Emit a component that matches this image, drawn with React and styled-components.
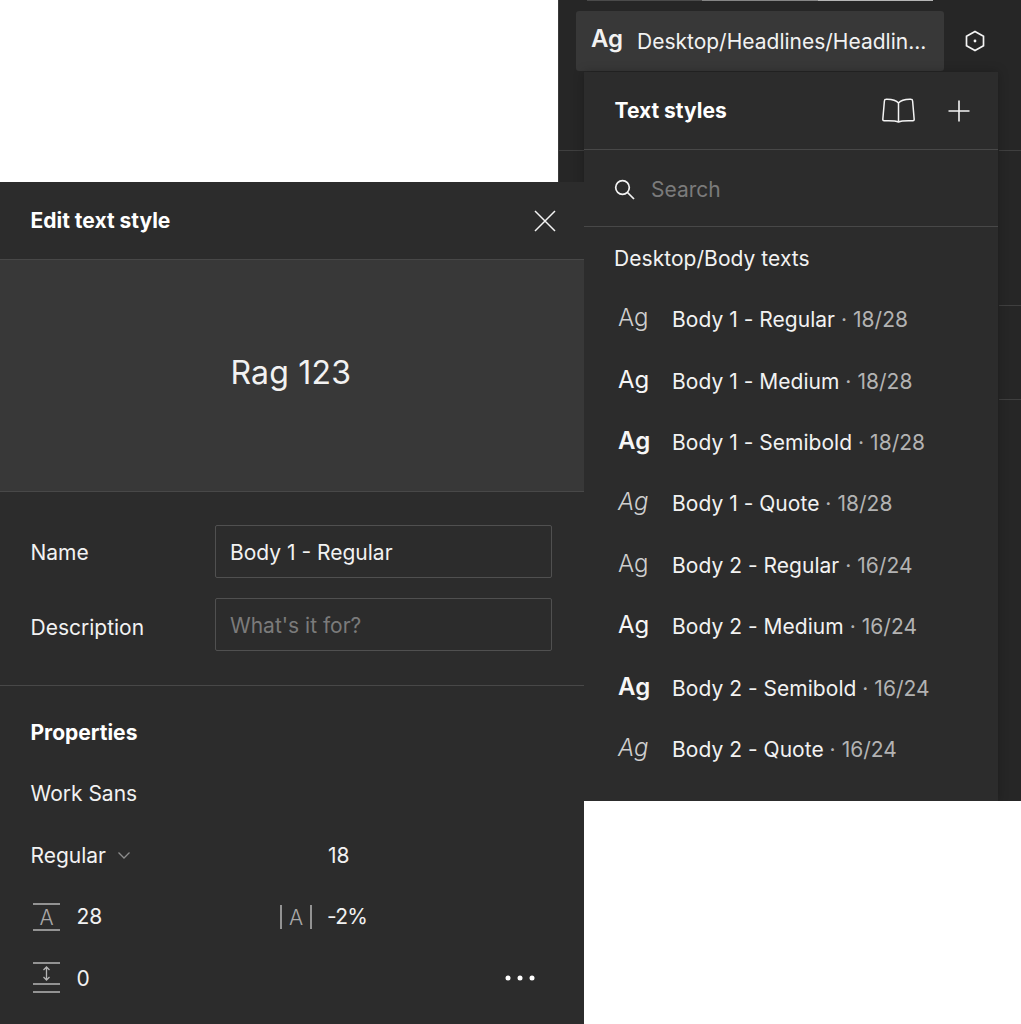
import React from "react";
import styled, { createGlobalStyle } from "styled-components";

const GlobalStyle = createGlobalStyle`
  html, body {
    margin: 0;
    padding: 0;
    background: #fff;
  }
  * {
    box-sizing: border-box;
  }
`;

const Canvas = styled.div`
  position: relative;
  width: 1021px;
  height: 1024px;
  overflow: hidden;
  background: #fff;
  font-family: Inter, "Liberation Sans", sans-serif;
  color: #f2f2f2;
`;

const BackWindow = styled.div`
  position: absolute;
  left: 558px;
  top: 0;
  width: 463px;
  height: 801px;
  overflow: hidden;
  padding: 11px 0 0 17px;
  background: #262626;
  border-left: 1px solid #3a3a3a;
`;

const TopStrip = styled.div`
  position: absolute;
  left: 28px;
  top: 0;
  width: 346px;
  height: 1px;
  background: linear-gradient(
    to right,
    #4a4a4a 0 115px,
    #858585 115px 231px,
    #b5b5b5 231px 346px
  );
`;

const SideLine = styled.div`
  position: absolute;
  height: 1px;
  left: ${(p) => (p.$side === "left" ? "0" : "440px")};
  width: ${(p) => (p.$side === "left" ? "26px" : "23px")};
  top: ${(p) => p.$top}px;
  background: #3f3f3f;
`;

const Toolbar = styled.div`
  display: flex;
  align-items: center;
`;

const StyleField = styled.div`
  display: flex;
  align-items: center;
  width: 368px;
  height: 60px;
  padding-left: 15px;
  background: #383838;
  border-radius: 3px;
`;

const FieldAg = styled.span`
  width: 46px;
  margin-top: -6px;
  font-size: 24px;
  font-weight: 600;
`;

const FieldName = styled.span`
  font-size: 21px;
  white-space: nowrap;
`;

const ToolbarIcon = styled.div`
  display: flex;
  margin-left: 20px;
`;

const Popover = styled.div`
  position: relative;
  width: 414px;
  height: 729px;
  margin: 1px 0 0 8px;
  background: #2c2c2c;
  overflow: hidden;
  box-shadow: 0 0 10px rgba(0, 0, 0, 0.25);
`;

const PopoverHeader = styled.div`
  display: flex;
  align-items: center;
  height: 78px;
  padding: 0 27px 0 30.5px;
  border-bottom: 1px solid #484848;
`;

const Title = styled.h2`
  flex: 1;
  margin: 0;
  font-size: 21px;
  font-weight: 700;
  color: #fff;
`;

const HeaderIcons = styled.div`
  display: flex;
  align-items: center;
  gap: 31px;
`;

const SearchRow = styled.div`
  display: flex;
  align-items: center;
  gap: 16px;
  height: 77px;
  padding: 2px 0 0 30px;
  border-bottom: 1px solid #484848;
  font-size: 21px;
  color: #7b7b7b;
`;

const GroupLabel = styled.div`
  padding: 17px 0 0 30px;
  height: 62px;
  font-size: 21px;
  line-height: 29px;
  letter-spacing: 0.05px;
`;

const StyleRow = styled.div`
  display: flex;
  align-items: center;
  height: 61.43px;
  padding-left: 34px;
  white-space: nowrap;
  letter-spacing: 0.03px;
`;

const RowAg = styled.span`
  width: 54px;
  margin-top: -4px;
  font-size: 24px;
  font-weight: ${(p) => p.$weight};
  font-style: ${(p) => (p.$italic ? "italic" : "normal")};
  color: ${(p) => (p.$weight === 300 ? "#cfcfcf" : "#f6f6f6")};
`;

const RowName = styled.span`
  font-size: 21px;
`;

const RowSize = styled.span`
  font-size: 21px;
  color: #b3b3b3;
`;

const EditPanel = styled.div`
  position: absolute;
  left: 0;
  top: 182px;
  width: 583.5px;
  height: 842px;
  background: #2c2c2c;
`;

const PanelHeader = styled.div`
  display: flex;
  align-items: center;
  justify-content: space-between;
  height: 78px;
  padding: 0 27px 0 30.5px;
  border-bottom: 1px solid #484848;
`;

const Preview = styled.div`
  display: flex;
  align-items: center;
  justify-content: center;
  height: 232px;
  padding: 0 2px 6px 0;
  background: #383838;
  border-bottom: 1px solid #484848;
  font-size: 32px;
  letter-spacing: 0.2px;
`;

const FormSection = styled.div`
  display: grid;
  grid-template-columns: 184.5px 337px;
  row-gap: 20px;
  align-items: center;
  height: 194px;
  padding: 33px 0 0 30.5px;
  align-content: start;
  border-bottom: 1px solid #484848;
`;

const FieldLabel = styled.label`
  padding-top: ${(p) => p.$nudge}px;
  font-size: 21px;
`;

const Field = styled.div`
  display: flex;
  align-items: center;
  height: 53px;
  padding: 2px 0 0 14px;
  border: 1px solid #505050;
  border-radius: 2px;
  font-size: 21px;
  color: ${(p) => (p.$placeholder ? "#7b7b7b" : "#f2f2f2")};
`;

const Properties = styled.div`
  padding: 32px 48.5px 0 30.5px;
`;

const PropertiesTitle = styled.div`
  font-size: 21px;
  font-weight: 700;
  line-height: 30px;
  color: #fff;
`;

const PropRow = styled.div`
  display: grid;
  grid-template-columns: 248.5px 1fr auto;
  align-items: center;
  height: 61.5px;
  font-size: 21px;
`;

const FontRow = styled(PropRow)`
  height: 62px;
  margin-top: 14.5px;
`;

const PropCell = styled.div`
  display: flex;
  align-items: center;
  gap: ${(p) => p.$gap || 0}px;
  padding-left: ${(p) => p.$inset || 0}px;
`;

const TightValue = styled.span`
  letter-spacing: -0.8px;
`;

const Icon = styled.svg`
  display: block;
  flex: none;
  fill: none;
  stroke: ${(p) => p.$color || "#f4f4f4"};
  stroke-width: ${(p) => p.$stroke || 1.5};
`;

const HexIcon = () => (
  <Icon width="22" height="24" viewBox="0 0 22 24">
    <path d="M11 2.5 19.5 7.2v9.6L11 21.5 2.5 16.8V7.2z" strokeWidth="1.7" />
    <circle cx="11" cy="12" r="1.4" fill="#f4f4f4" stroke="none" />
  </Icon>
);

const BookIcon = () => (
  <Icon width="35" height="25" viewBox="0 0 35 25">
    <path d="M17.5 5C15 2 11 1 5 1.2 4 1.2 3.5 1.8 3.400 3L1.800 21.500c0 .8.5 1.200 1.200 1.200 6 0 11-.5 14.500 1.300 3.500-1.800 8.500-1.300 14.500-1.300.7 0 1.200-.4 1.200-1.200L31.600 3C31.500 1.800 31 1.200 30 1.200 24 1 20 2 17.500 5ZM17.500 5V24" />
  </Icon>
);

const PlusIcon = () => (
  <Icon width="24" height="24" viewBox="0 0 24 24" $stroke={1.6}>
    <path d="M12 1.500v21M1.500 12h21" />
  </Icon>
);

const SearchIcon = () => (
  <Icon width="21" height="21" viewBox="0 0 21 21" $stroke={1.7}>
    <circle cx="8.500" cy="8.500" r="6.800" />
    <path d="M13.500 13.500 20 20" />
  </Icon>
);

const CloseIcon = () => (
  <Icon width="24" height="24" viewBox="0 0 24 24" $stroke={1.5}>
    <path d="M2 2l20 20M22 2 2 22" />
  </Icon>
);

const ChevronIcon = () => (
  <Icon width="14" height="9" viewBox="0 0 14 9" $color="#8c8c8c" $stroke={1.3}>
    <path d="M1.500 1.500 7 7l5.500-5.500" />
  </Icon>
);

const LineHeightIcon = () => (
  <Icon width="30" height="30" viewBox="0 0 30 30" $color="#b5b5b5">
    <path d="M2 2h27M2 28h27" />
    <text x="15.500" y="23" textAnchor="middle" fontSize="21" fontWeight="300" fontFamily="Inter, sans-serif" fill="#a8a8a8" stroke="none">A</text>
  </Icon>
);

const LetterSpacingIcon = () => (
  <Icon width="34" height="26" viewBox="0 0 34 26" $color="#b5b5b5">
    <path d="M2 1v24M32 1v24" />
    <text x="17" y="21" textAnchor="middle" fontSize="21" fontWeight="300" fontFamily="Inter, sans-serif" fill="#a8a8a8" stroke="none">A</text>
  </Icon>
);

const ParagraphIcon = () => (
  <Icon width="30" height="34" viewBox="0 0 30 34" $color="#b5b5b5">
    <path d="M2 2h27M2 23h27M2 31h27" />
    <path d="M15.500 6v13M12.500 9l3-3 3 3M12.500 16l3 3 3-3" strokeWidth="1.300" />
  </Icon>
);

const DotsIcon = () => (
  <Icon width="30" height="6" viewBox="0 0 30 6">
    <circle cx="3" cy="3" r="2.500" fill="#fff" stroke="none" />
    <circle cx="15" cy="3" r="2.500" fill="#fff" stroke="none" />
    <circle cx="27" cy="3" r="2.500" fill="#fff" stroke="none" />
  </Icon>
);

const styles = [
  { name: "Body 1 - Regular", size: "18/28", weight: 300 },
  { name: "Body 1 - Medium", size: "18/28", weight: 400 },
  { name: "Body 1 - Semibold", size: "18/28", weight: 600 },
  { name: "Body 1 - Quote", size: "18/28", weight: 300, italic: true },
  { name: "Body 2 - Regular", size: "16/24", weight: 300 },
  { name: "Body 2 - Medium", size: "16/24", weight: 400 },
  { name: "Body 2 - Semibold", size: "16/24", weight: 600 },
  { name: "Body 2 - Quote", size: "16/24", weight: 300, italic: true },
];

const sideLines = [
  { side: "left", top: 150 },
  { side: "right", top: 150 },
  { side: "right", top: 305 },
  { side: "right", top: 399 },
];

export default function App() {
  return (
    <Canvas>
      <GlobalStyle />
      <BackWindow>
        <TopStrip />
        {sideLines.map((l) => (
          <SideLine key={l.side + l.top} $side={l.side} $top={l.top} />
        ))}
        <Toolbar>
          <StyleField>
            <FieldAg>Ag</FieldAg>
            <FieldName>Desktop/Headlines/Headlin...</FieldName>
          </StyleField>
          <ToolbarIcon>
            <HexIcon />
          </ToolbarIcon>
        </Toolbar>
        <Popover>
          <PopoverHeader>
            <Title>Text styles</Title>
            <HeaderIcons>
              <BookIcon />
              <PlusIcon />
            </HeaderIcons>
          </PopoverHeader>
          <SearchRow>
            <SearchIcon />
            <span>Search</span>
          </SearchRow>
          <GroupLabel>Desktop/Body texts</GroupLabel>
          {styles.map((s) => (
            <StyleRow key={s.name}>
              <RowAg $weight={s.weight} $italic={s.italic}>Ag</RowAg>
              <RowName>{s.name}</RowName>
              <RowSize>&nbsp;· {s.size}</RowSize>
            </StyleRow>
          ))}
        </Popover>
      </BackWindow>

      <EditPanel>
        <PanelHeader>
          <Title>Edit text style</Title>
          <CloseIcon />
        </PanelHeader>
        <Preview>Rag 123</Preview>
        <FormSection>
          <FieldLabel $nudge={2}>Name</FieldLabel>
          <Field>Body 1 - Regular</Field>
          <FieldLabel $nudge={6}>Description</FieldLabel>
          <Field $placeholder>What's it for?</Field>
        </FormSection>
        <Properties>
          <PropertiesTitle>Properties</PropertiesTitle>
          <FontRow>
            <span>Work Sans</span>
          </FontRow>
          <PropRow>
            <PropCell $gap={11}>
              Regular <ChevronIcon />
            </PropCell>
            <PropCell $inset={49}>18</PropCell>
          </PropRow>
          <PropRow>
            <PropCell $gap={16}>
              <LineHeightIcon /> 28
            </PropCell>
            <PropCell $gap={14}>
              <LetterSpacingIcon /> <TightValue>-2%</TightValue>
            </PropCell>
          </PropRow>
          <PropRow>
            <PropCell $gap={16}>
              <ParagraphIcon /> 0
            </PropCell>
            <span />
            <DotsIcon />
          </PropRow>
        </Properties>
      </EditPanel>
    </Canvas>
  );
}
